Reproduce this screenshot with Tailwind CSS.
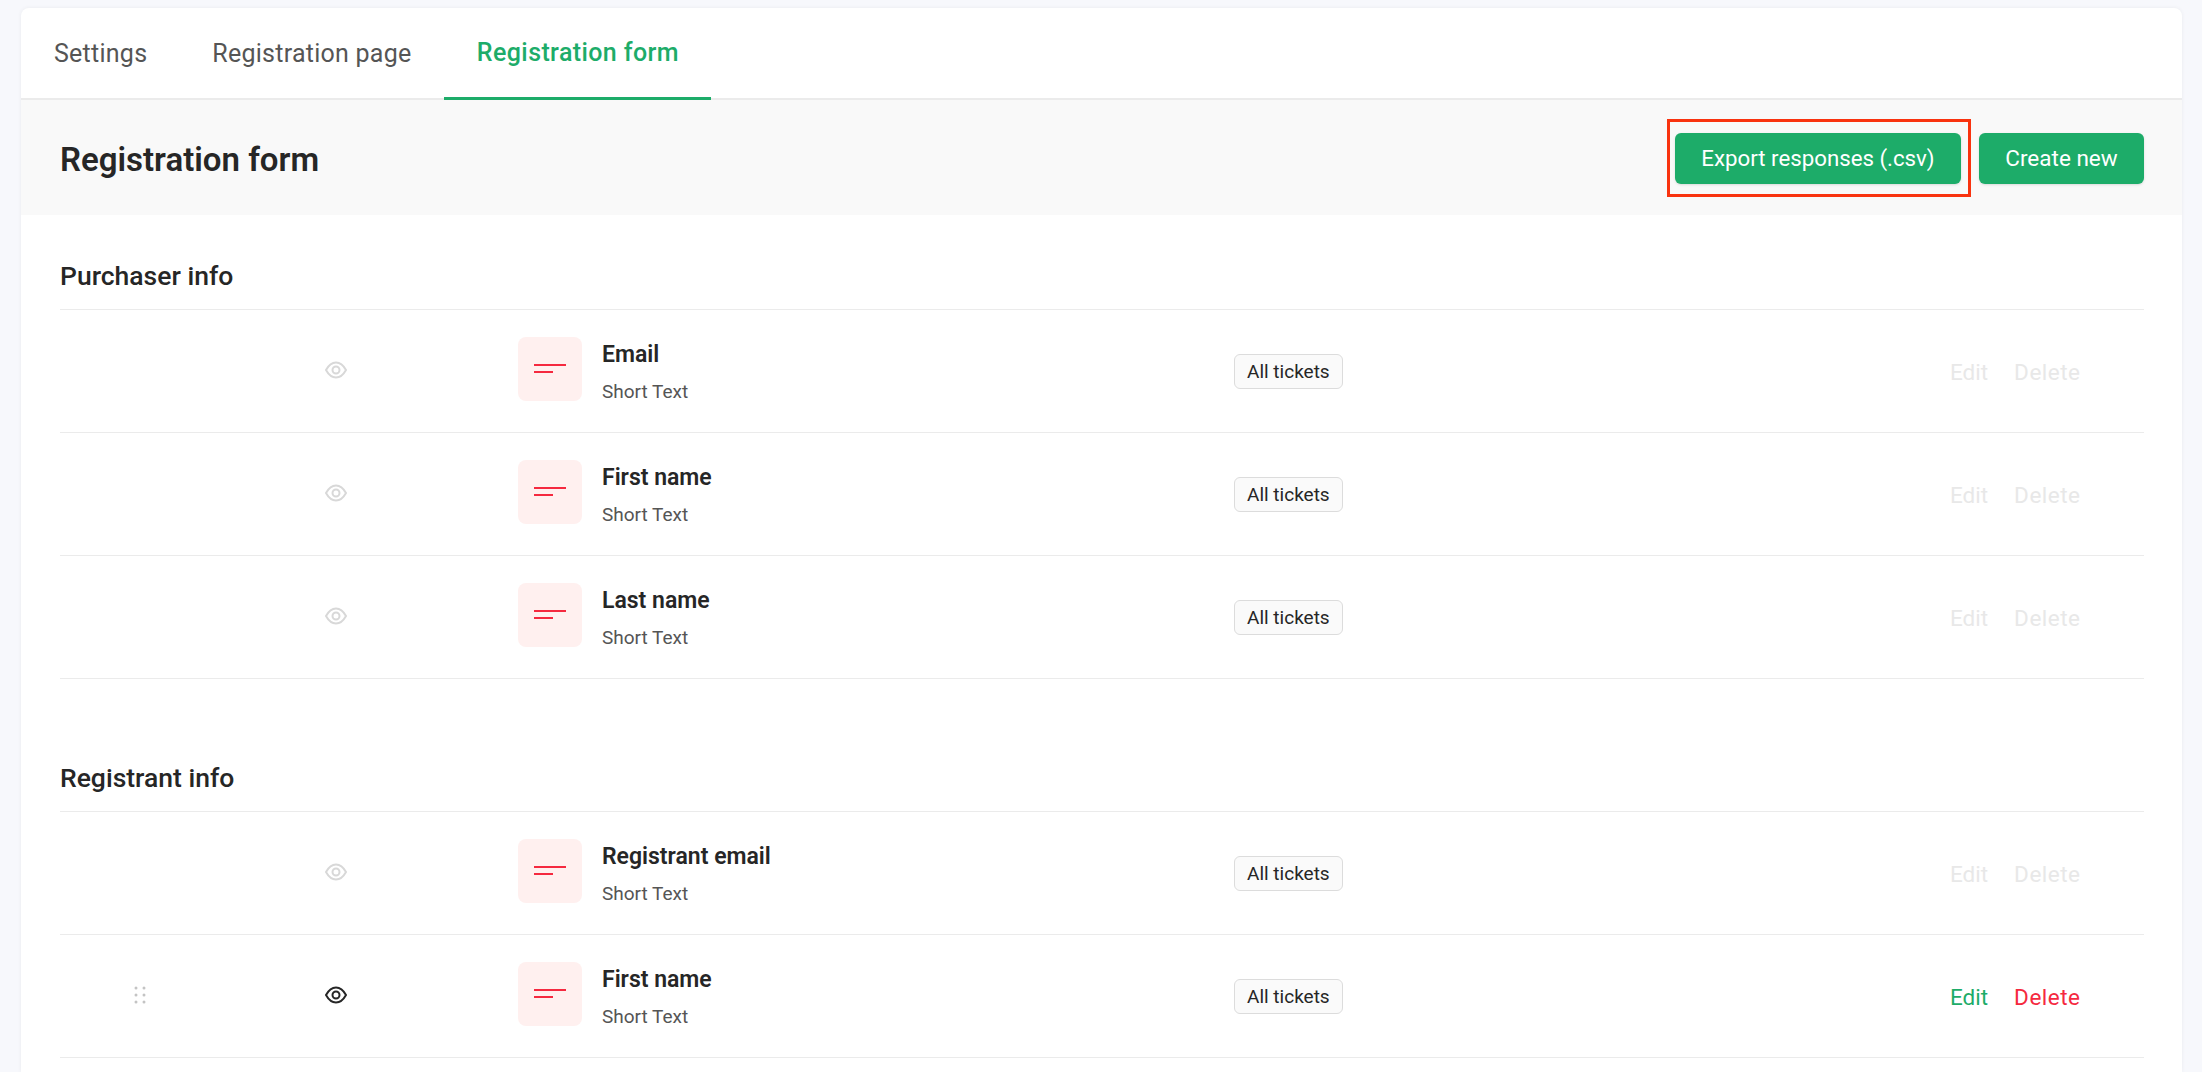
<!DOCTYPE html>
<html lang="en">
<head>
    <meta charset="UTF-8">
    <title>Registration form</title>
    <script src="https://cdn.jsdelivr.net/npm/@tailwindcss/browser@4"></script>
</head>
<body class="h-[1072px] overflow-hidden bg-[#f7f8fc] font-['Roboto',sans-serif] text-[#262626]">
    <div class="ml-[21px] mr-[20px] mt-2 h-[1064px] rounded-t-lg bg-white shadow-[0_0_4px_rgba(0,0,0,0.06)]">

        <!-- Tabs -->
        <div class="flex h-[92px] border-b-2 border-[#ebebeb] text-[25px] tracking-[0.25px] text-[#555555]">
            <a class="ml-[33px] flex h-[92px] items-center">Settings</a>
            <a class="ml-[65px] flex h-[92px] items-center">Registration page</a>
            <a class="ml-[33px] flex h-[92px] w-[267px] items-center justify-center border-b-[3px] border-[#1dac69] font-medium tracking-[0.4px] text-[#1dac69]">Registration form</a>
        </div>

        <!-- Header -->
        <div class="flex h-[115px] items-center justify-between bg-[#f9f9f9] pl-[39px] pr-[38px]">
            <h1 class="pt-[4px] text-[33px] font-semibold">Registration form</h1>
            <div class="flex gap-[18px] pt-[2px] text-[22.250px] text-white">
                <div class="relative">
                    <button class="flex h-[51px] w-[286px] items-center justify-center rounded-md bg-[#1dac69] shadow-sm">Export responses (.csv)</button>
                    <div class="absolute -bottom-[13px] -left-[8px] -right-[10px] -top-[14px] border-[3px] border-[#f9330f]"></div>
                </div>
                <button class="flex h-[51px] w-[165px] items-center justify-center rounded-md bg-[#1dac69] text-[22.500px] shadow-sm">Create new</button>
            </div>
        </div>

        <div class="pl-[39px] pr-[38px]">
            <!-- Purchaser info -->
            <h2 class="flex h-[94px] items-center pt-[27px] text-[26.500px] font-medium">Purchaser info</h2>
            <div class="border-t border-[#ebebeb]">
                <div class="grid h-[123px] grid-cols-[191px_193px_716px_716px_1fr] items-center border-b border-[#ebebeb] pb-[5px] pl-[74px]">
                    <div></div>
                    <svg class="mt-[3px] h-[18px] w-[22px] text-[#d8d8d8]" viewBox="0 0 22 18" fill="none" stroke="currentColor" stroke-width="2"><path d="M1 9C3.500 4.500 7 1.500 11 1.500s7.500 3 10 7.500c-2.500 4.500-6 7.500-10 7.500S3.500 13.500 1 9Z"/><circle cx="11" cy="9" r="3.500"/></svg>
                    <div class="flex items-center gap-5">
                        <div class="flex h-16 w-16 flex-col justify-center gap-[5px] rounded-lg bg-[#fff0ef] pl-4">
                            <div class="h-[2px] w-8 bg-[#f5293f]"></div>
                            <div class="h-[2px] w-[19px] bg-[#f5293f]"></div>
                        </div>
                        <div class="mt-[11px]">
                            <p class="text-[23px] font-semibold leading-[35px]">Email</p>
                            <p class="text-[19px] leading-[39px] text-[#555555]">Short Text</p>
                        </div>
                    </div>
                    <div class="mt-[5px]"><span class="inline-block rounded-md border border-[#dcdcdc] bg-[#fafafa] px-3 text-[19px] leading-[33px]">All tickets</span></div>
                    <div class="mt-[8px] flex gap-[26px] text-[22.500px] text-[#e8e8e8]"><span>Edit</span><span class="tracking-[0.5px]">Delete</span></div>
                </div>
                <div class="grid h-[123px] grid-cols-[191px_193px_716px_716px_1fr] items-center border-b border-[#ebebeb] pb-[5px] pl-[74px]">
                    <div></div>
                    <svg class="mt-[3px] h-[18px] w-[22px] text-[#d8d8d8]" viewBox="0 0 22 18" fill="none" stroke="currentColor" stroke-width="2"><path d="M1 9C3.500 4.500 7 1.500 11 1.500s7.500 3 10 7.500c-2.500 4.500-6 7.500-10 7.500S3.500 13.500 1 9Z"/><circle cx="11" cy="9" r="3.500"/></svg>
                    <div class="flex items-center gap-5">
                        <div class="flex h-16 w-16 flex-col justify-center gap-[5px] rounded-lg bg-[#fff0ef] pl-4">
                            <div class="h-[2px] w-8 bg-[#f5293f]"></div>
                            <div class="h-[2px] w-[19px] bg-[#f5293f]"></div>
                        </div>
                        <div class="mt-[11px]">
                            <p class="text-[23px] font-semibold leading-[35px]">First name</p>
                            <p class="text-[19px] leading-[39px] text-[#555555]">Short Text</p>
                        </div>
                    </div>
                    <div class="mt-[5px]"><span class="inline-block rounded-md border border-[#dcdcdc] bg-[#fafafa] px-3 text-[19px] leading-[33px]">All tickets</span></div>
                    <div class="mt-[8px] flex gap-[26px] text-[22.500px] text-[#e8e8e8]"><span>Edit</span><span class="tracking-[0.5px]">Delete</span></div>
                </div>
                <div class="grid h-[123px] grid-cols-[191px_193px_716px_716px_1fr] items-center border-b border-[#ebebeb] pb-[5px] pl-[74px]">
                    <div></div>
                    <svg class="mt-[3px] h-[18px] w-[22px] text-[#d8d8d8]" viewBox="0 0 22 18" fill="none" stroke="currentColor" stroke-width="2"><path d="M1 9C3.500 4.500 7 1.500 11 1.500s7.500 3 10 7.500c-2.500 4.500-6 7.500-10 7.500S3.500 13.500 1 9Z"/><circle cx="11" cy="9" r="3.500"/></svg>
                    <div class="flex items-center gap-5">
                        <div class="flex h-16 w-16 flex-col justify-center gap-[5px] rounded-lg bg-[#fff0ef] pl-4">
                            <div class="h-[2px] w-8 bg-[#f5293f]"></div>
                            <div class="h-[2px] w-[19px] bg-[#f5293f]"></div>
                        </div>
                        <div class="mt-[11px]">
                            <p class="text-[23px] font-semibold leading-[35px]">Last name</p>
                            <p class="text-[19px] leading-[39px] text-[#555555]">Short Text</p>
                        </div>
                    </div>
                    <div class="mt-[5px]"><span class="inline-block rounded-md border border-[#dcdcdc] bg-[#fafafa] px-3 text-[19px] leading-[33px]">All tickets</span></div>
                    <div class="mt-[8px] flex gap-[26px] text-[22.500px] text-[#e8e8e8]"><span>Edit</span><span class="tracking-[0.5px]">Delete</span></div>
                </div>
            </div>

            <!-- Registrant info -->
            <h2 class="flex h-[132px] items-center pt-[66px] text-[26.500px] font-medium">Registrant info</h2>
            <div class="border-t border-[#ebebeb]">
                <div class="grid h-[123px] grid-cols-[191px_193px_716px_716px_1fr] items-center border-b border-[#ebebeb] pb-[5px] pl-[74px]">
                    <div></div>
                    <svg class="mt-[3px] h-[18px] w-[22px] text-[#d8d8d8]" viewBox="0 0 22 18" fill="none" stroke="currentColor" stroke-width="2"><path d="M1 9C3.500 4.500 7 1.500 11 1.500s7.500 3 10 7.500c-2.500 4.500-6 7.500-10 7.500S3.500 13.500 1 9Z"/><circle cx="11" cy="9" r="3.500"/></svg>
                    <div class="flex items-center gap-5">
                        <div class="flex h-16 w-16 flex-col justify-center gap-[5px] rounded-lg bg-[#fff0ef] pl-4">
                            <div class="h-[2px] w-8 bg-[#f5293f]"></div>
                            <div class="h-[2px] w-[19px] bg-[#f5293f]"></div>
                        </div>
                        <div class="mt-[11px]">
                            <p class="text-[23px] font-semibold leading-[35px]">Registrant email</p>
                            <p class="text-[19px] leading-[39px] text-[#555555]">Short Text</p>
                        </div>
                    </div>
                    <div class="mt-[5px]"><span class="inline-block rounded-md border border-[#dcdcdc] bg-[#fafafa] px-3 text-[19px] leading-[33px]">All tickets</span></div>
                    <div class="mt-[8px] flex gap-[26px] text-[22.500px] text-[#e8e8e8]"><span>Edit</span><span class="tracking-[0.5px]">Delete</span></div>
                </div>
                <div class="grid h-[123px] grid-cols-[191px_193px_716px_716px_1fr] items-center border-b border-[#ebebeb] pb-[5px] pl-[74px]">
                    <svg class="mt-[3px] h-[18px] w-[12px] text-[#c4c4c4]" viewBox="0 0 12 18" fill="currentColor"><circle cx="2" cy="2" r="1.500"/><circle cx="10" cy="2" r="1.500"/><circle cx="2" cy="9" r="1.500"/><circle cx="10" cy="9" r="1.500"/><circle cx="2" cy="16" r="1.500"/><circle cx="10" cy="16" r="1.500"/></svg>
                    <svg class="mt-[3px] h-[18px] w-[22px] text-[#262626]" viewBox="0 0 22 18" fill="none" stroke="currentColor" stroke-width="2"><path d="M1 9C3.500 4.500 7 1.500 11 1.500s7.500 3 10 7.500c-2.500 4.500-6 7.500-10 7.500S3.500 13.500 1 9Z"/><circle cx="11" cy="9" r="3.500"/></svg>
                    <div class="flex items-center gap-5">
                        <div class="flex h-16 w-16 flex-col justify-center gap-[5px] rounded-lg bg-[#fff0ef] pl-4">
                            <div class="h-[2px] w-8 bg-[#f5293f]"></div>
                            <div class="h-[2px] w-[19px] bg-[#f5293f]"></div>
                        </div>
                        <div class="mt-[11px]">
                            <p class="text-[23px] font-semibold leading-[35px]">First name</p>
                            <p class="text-[19px] leading-[39px] text-[#555555]">Short Text</p>
                        </div>
                    </div>
                    <div class="mt-[5px]"><span class="inline-block rounded-md border border-[#dcdcdc] bg-[#fafafa] px-3 text-[19px] leading-[33px]">All tickets</span></div>
                    <div class="mt-[8px] flex gap-[26px] text-[22.500px]"><span class="text-[#1dac69]">Edit</span><span class="tracking-[0.5px] text-[#f5293f]">Delete</span></div>
                </div>
            </div>
        </div>
    </div>
</body>
</html>
